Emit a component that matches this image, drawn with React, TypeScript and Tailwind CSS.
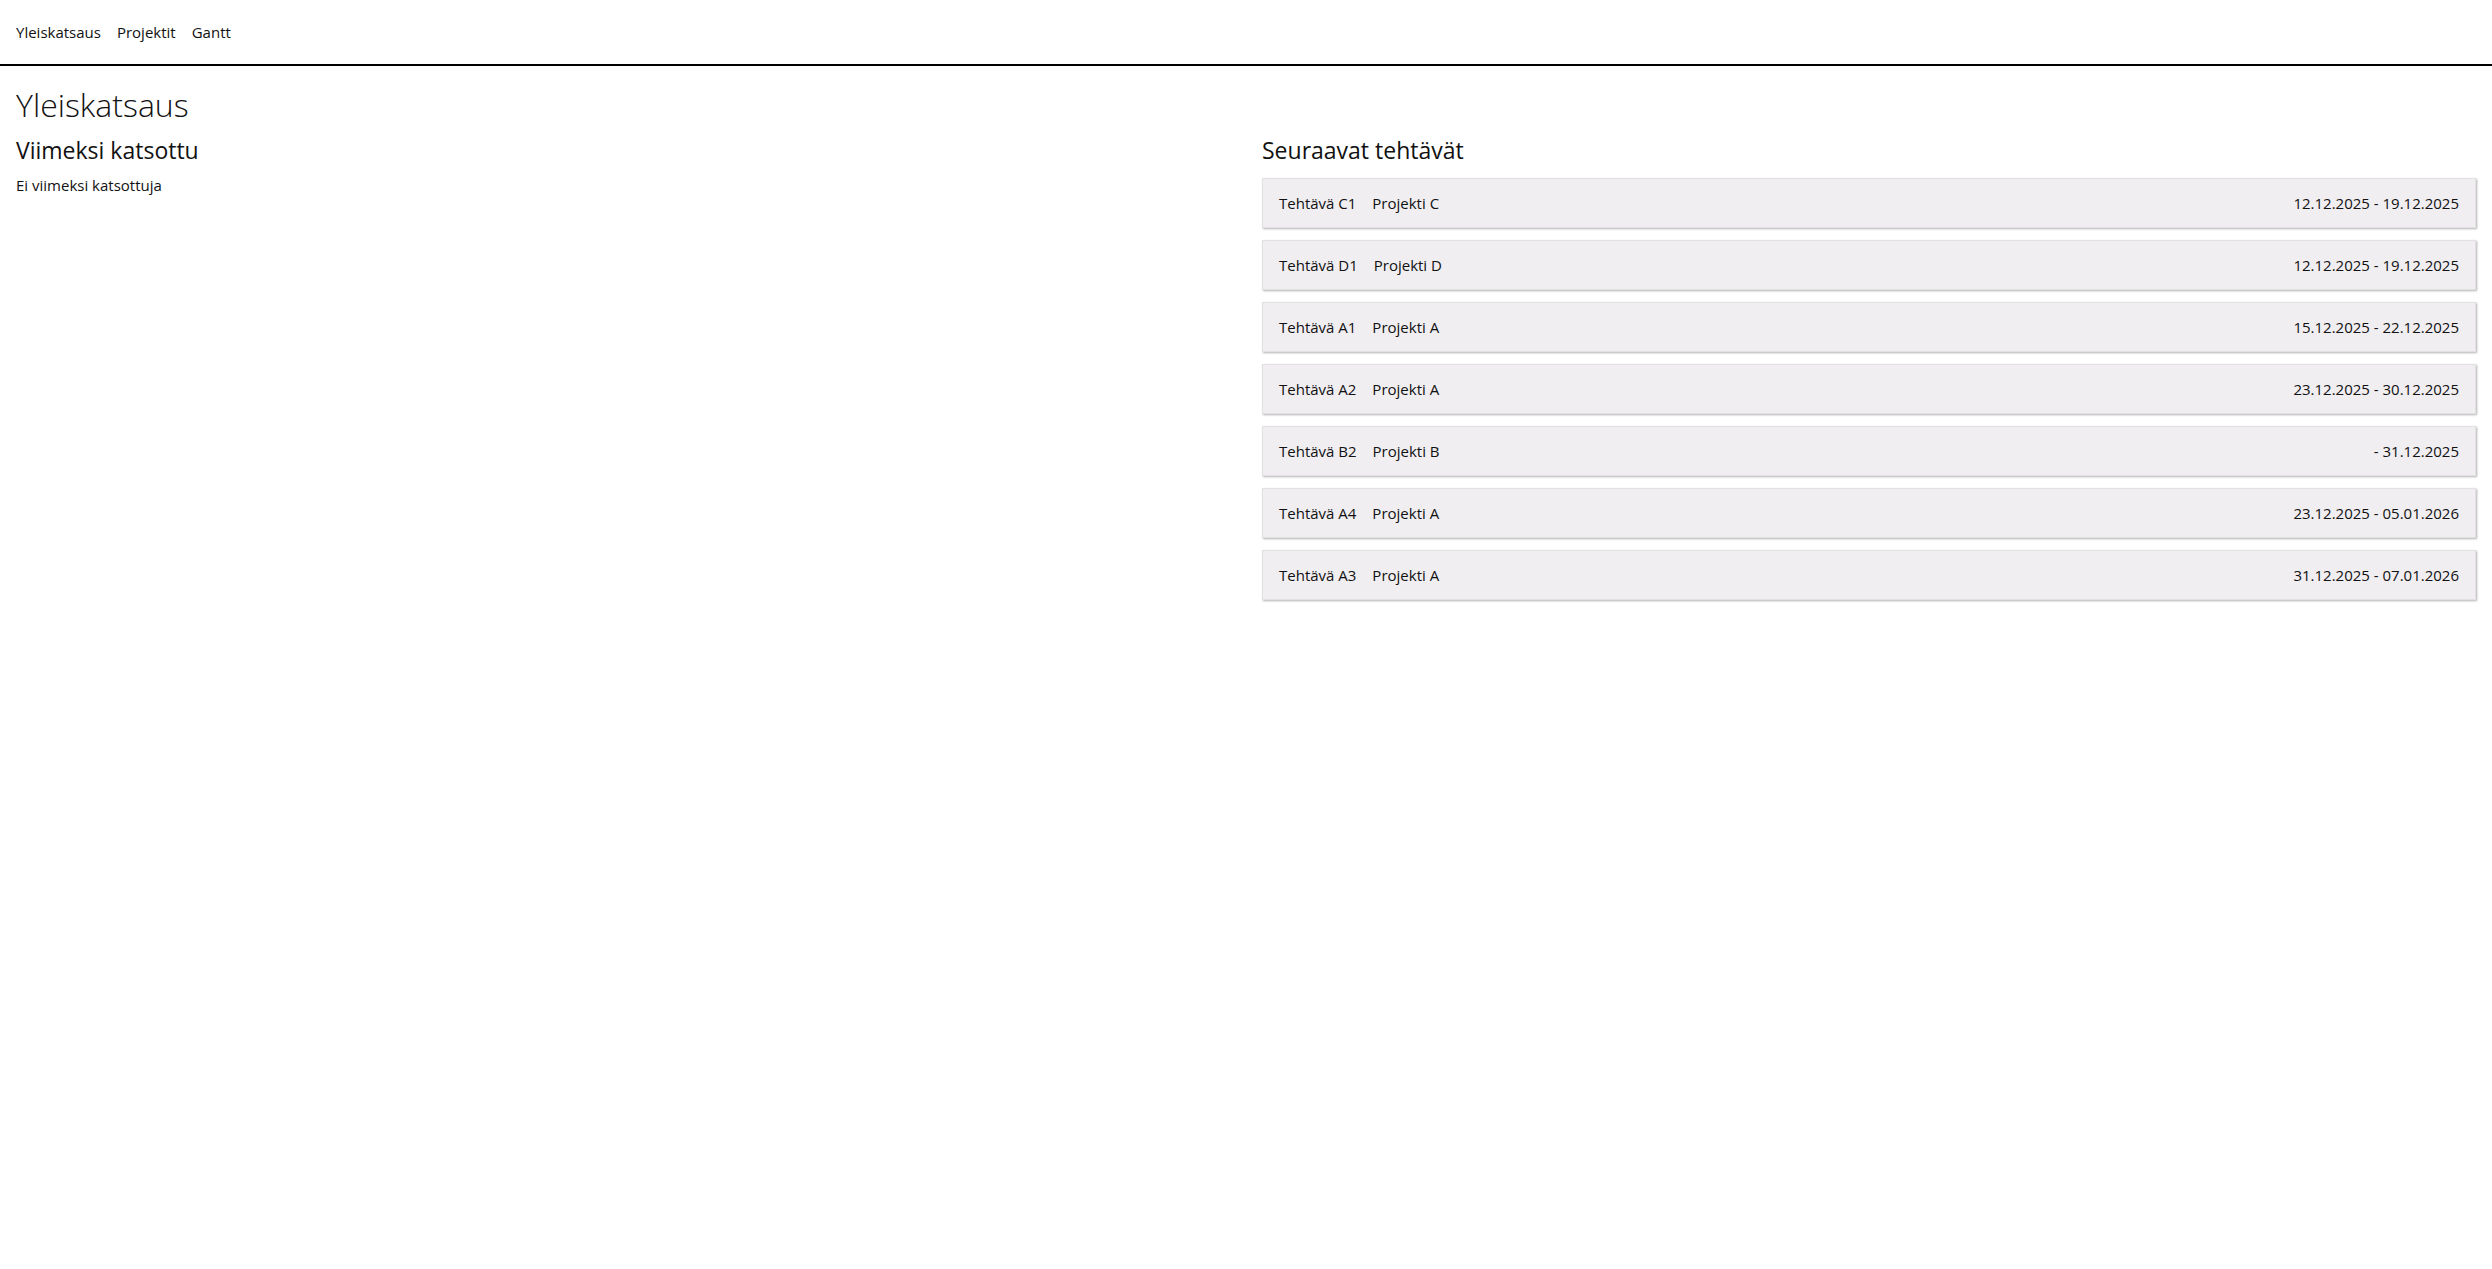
const tasks = [
  { name: 'Tehtävä C1', project: 'Projekti C', dates: '12.12.2025 - 19.12.2025' },
  { name: 'Tehtävä D1', project: 'Projekti D', dates: '12.12.2025 - 19.12.2025' },
  { name: 'Tehtävä A1', project: 'Projekti A', dates: '15.12.2025 - 22.12.2025' },
  { name: 'Tehtävä A2', project: 'Projekti A', dates: '23.12.2025 - 30.12.2025' },
  { name: 'Tehtävä B2', project: 'Projekti B', dates: '- 31.12.2025' },
  { name: 'Tehtävä A4', project: 'Projekti A', dates: '23.12.2025 - 05.01.2026' },
  { name: 'Tehtävä A3', project: 'Projekti A', dates: '31.12.2025 - 07.01.2026' },
];

function TaskRow({ name, project, dates }: { name: string; project: string; dates: string }) {
  return (
    <div className="mb-3 flex h-[50px] items-center justify-between border border-[#e2e0e3] bg-[#f0eef1] px-4 text-[15px] shadow-[1px_1px_2px_rgba(0,0,0,0.3)]">
      <div className="flex gap-4">
        <span>{name}</span>
        <span>{project}</span>
      </div>
      <span>{dates}</span>
    </div>
  );
}

export default function App() {
  return (
    <div className="min-h-screen bg-white text-[#111] [font-family:'Open_Sans',sans-serif]">
      <nav className="flex h-[66px] items-center gap-4 border-b-2 border-black px-4 text-[15px]">
        <a>Yleiskatsaus</a>
        <a>Projektit</a>
        <a>Gantt</a>
      </nav>
      <main className="px-4">
        <h1 className="mt-[19px] text-[32px] font-light leading-10">Yleiskatsaus</h1>
        <div className="grid grid-cols-2 gap-8">
          <section>
            <h2 className="mt-[9px] text-[23px] leading-8">Viimeksi katsottu</h2>
            <p className="mt-2 text-[15px]">Ei viimeksi katsottuja</p>
          </section>
          <section>
            <h2 className="mt-[9px] text-[23px] leading-8">Seuraavat tehtävät</h2>
            <div className="mt-3">
              {tasks.map((t) => (
                <TaskRow key={t.name} {...t} />
              ))}
            </div>
          </section>
        </div>
      </main>
    </div>
  );
}
